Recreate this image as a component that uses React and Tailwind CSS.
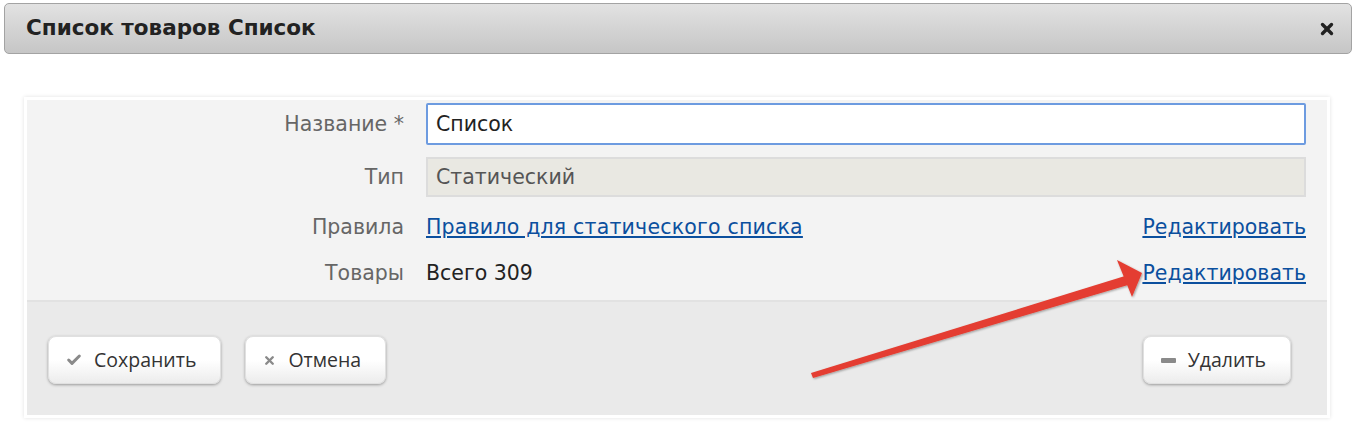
import { Check, X } from 'lucide-react'

const form = { fontFamily: '"DejaVu Sans", "Open Sans", sans-serif' }
const btnFont = { fontFamily: '"Open Sans", "Noto Sans", sans-serif' }

function Btn({ icon, children }) {
  return (
    <button
      className="flex items-center gap-[12px] h-[48px] pl-[17px] pr-[24px] rounded-[8px] border border-[#e0e0e0] bg-gradient-to-b from-white via-white to-[#ececec] shadow-[0_1px_3px_rgba(0,0,0,0.35)] text-[19.5px] text-[#333]"
      style={btnFont}
    >
      <span className="text-[#8a8a8a] flex items-center">{icon}</span>
      {children}
    </button>
  )
}

export default function App() {
  return (
    <div className="relative w-[1356px] h-[431px] bg-white overflow-hidden" style={form}>
      {/* Title bar */}
      <div className="mx-[4px] mt-[3px] h-[51px] rounded-[5px] border border-[#a3a3a3] bg-gradient-to-b from-[#e2e2e2] to-[#c6c6c6] flex items-center justify-between pl-[21px] pr-[15px]">
        <h1 className="text-[21.5px] font-bold text-[#222]">Список товаров Список</h1>
        <X size={18} strokeWidth={4.5} className="text-[#222]" />
      </div>

      {/* Panel */}
      <div className="mx-[24px] mt-[43px] w-[1306px] p-[3px] bg-white shadow-[0_0_4px_rgba(0,0,0,0.12)]">
        <div className="bg-[#f3f3f3] pt-[3px] pb-[12px] pr-[21px] grid grid-cols-[377px_1fr] gap-x-[22px] items-center text-[20.5px] leading-[30px]">
          <div className="text-right text-[#666]">Название *</div>
          <div className="h-[42px] border-2 border-[#6d9be0] bg-white flex items-center px-[8px] text-[#222] rounded-[2px]">Список</div>

          <div className="text-right text-[#666] mt-[12px]">Тип</div>
          <div className="mt-[12px] h-[40px] border-2 border-[#dcdcdc] bg-[#e9e8e2] flex items-center px-[8px] text-[#555]">Статический</div>

          <div className="text-right text-[#666] mt-[15px]">Правила</div>
          <div className="mt-[15px] flex justify-between">
            <a className="text-[#0b4f9e] underline tracking-[0.2px]">Правило для статического списка</a>
            <a className="text-[#0b4f9e] underline">Редактировать</a>
          </div>

          <div className="text-right text-[#666] mt-[16px]">Товары</div>
          <div className="mt-[16px] flex justify-between">
            <span className="text-[#222]">Всего 309</span>
            <a className="text-[#0b4f9e] underline">Редактировать</a>
          </div>
        </div>
        <div className="border-t-2 border-[#e2e2e2] bg-[#eaeaea] h-[115px] flex items-center justify-between pl-[21px] pr-[36px] pt-[3px]">
          <div className="flex gap-[24px]">
            <Btn icon={<Check size={16} strokeWidth={4.5} />}>Сохранить</Btn>
            <Btn icon={<X size={13} strokeWidth={4.5} />}>Отмена</Btn>
          </div>
          <Btn icon={<span className="block w-[15px] h-[5px] bg-[#8a8a8a] rounded-[1px]" />}>Удалить</Btn>
        </div>
      </div>

      {/* Annotation arrow */}
      <svg className="absolute left-0 top-0 pointer-events-none" width="1356" height="431">
        <defs>
          <filter id="sh" x="-10%" y="-10%" width="120%" height="120%">
            <feDropShadow dx="1" dy="1" stdDeviation="1" floodColor="#000" floodOpacity="0.35" />
          </filter>
        </defs>
        <g filter="url(#sh)" fill="#e43d30">
          <polygon points="811,373 1125,276 1128,285 813,378" />
          <polygon points="1142,273 1117,260 1132,297" />
        </g>
      </svg>
    </div>
  )
}
